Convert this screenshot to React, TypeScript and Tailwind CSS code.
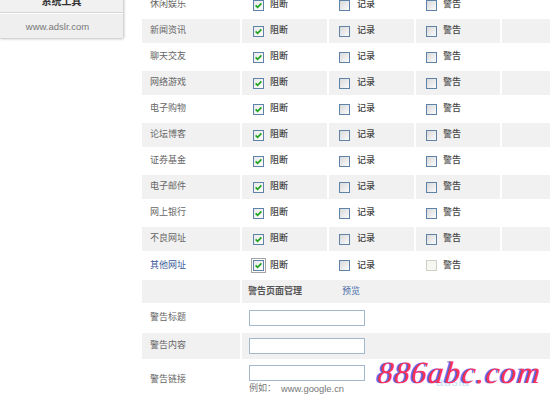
import React from "react";

const FONT = '"Liberation Sans", "Noto Sans CJK SC", sans-serif';

function Check({ checked, disabled }: { checked?: boolean; disabled?: boolean }) {
  if (disabled) {
    return <span className="inline-block w-[11px] h-[11px] border border-[#cfcfc6] bg-[#f7f7f2] shrink-0" />;
  }
  return (
    <span
      className={
        "relative inline-block w-[11px] h-[11px] border border-[#5f82a8] shrink-0 " +
        (checked ? "bg-gradient-to-br from-[#e9e9e9] to-[#fcfcfc]" : "bg-gradient-to-br from-[#d9d9d9] to-[#fbfbfb]")
      }
    >
      {checked && (
        <svg className="absolute left-0 top-0" width="9" height="9" viewBox="0 0 9 9">
          <polyline points="1.6,4.4 3.6,6.4 7.4,2.4" fill="none" stroke="#1ea31e" strokeWidth="1.6" />
        </svg>
      )}
    </span>
  );
}

const labels = [
  "休闲娱乐",
  "新闻资讯",
  "聊天交友",
  "网络游戏",
  "电子购物",
  "论坛博客",
  "证券基金",
  "电子邮件",
  "网上银行",
  "不良网址",
  "其他网址",
];

export default function App() {
  return (
    <div
      className="relative w-[550px] h-[394px] overflow-hidden bg-white flex"
      style={{ fontFamily: FONT }}
    >
      {/* sidebar */}
      <div className="w-[142px] shrink-0">
        <div className="w-[124px] mt-[-10px] border-r border-b border-[#d4d4d4] rounded-br-[4px] bg-[#f1f1f1] shadow-[1px_1px_2px_rgba(0,0,0,0.12)]">
          <div className="h-[23px] flex items-center justify-center text-[10px] font-bold text-[#333] border-b border-[#d8d8d8]">
            系统工具
          </div>
          <div className="h-[25px] flex items-center justify-center pr-[8px] pt-[2px] text-[9.5px] text-[#777] bg-[#efefef] border-t border-white">
            www.adslr.com
          </div>
        </div>
      </div>

      {/* table */}
      <div className="mt-[-7px] grid grid-cols-[98px_85px_85px_84px_60px] gap-[2px] content-start text-[9px] text-[#666]">
        {labels.map((l, i) => {
          const gray = i % 2 === 1;
          const last = i === 10;
          const bg = gray ? "bg-[#f1f1f1]" : "bg-white";
          const h = last ? "h-[25px]" : "h-[24px]";
          return (
            <React.Fragment key={l}>
              <div className={`${bg} ${h} flex items-center pl-[8px] ${last ? "text-[#3a5a99]" : ""}`}>{l}</div>
              <div className={`${bg} ${h} flex items-center pl-[11px] gap-[6px] text-[#444] font-medium`}>
                {last ? (
                  <span className="inline-flex items-center justify-center w-[15px] h-[15px] border border-[#a3a3a3] -ml-[2px] -mr-[2px]">
                    <Check checked />
                  </span>
                ) : (
                  <Check checked />
                )}
                <span>阻断</span>
              </div>
              <div className={`${bg} ${h} flex items-center pl-[10px] gap-[7px] text-[#444] font-medium`}>
                <Check />
                <span>记录</span>
              </div>
              <div className={`${bg} ${h} flex items-center pl-[10px] gap-[6px] text-[#444] font-medium`}>
                <Check disabled={last} />
                <span>警告</span>
              </div>
              <div className={`${bg} ${h}`} />
            </React.Fragment>
          );
        })}

        {/* warning page header */}
        <div className="bg-[#f1f1f1] h-[23px]" />
        <div className="col-span-4 bg-[#f1f1f1] h-[23px] flex items-center pl-[6px] text-[#555]">
          <span className="w-[94px] font-bold">警告页面管理</span>
          <span className="text-[#4a6aa8]">预览</span>
        </div>

        {/* title */}
        <div className="h-[26px] flex items-center pl-[8px]">警告标题</div>
        <div className="col-span-4 h-[26px] flex items-center pl-[7px]">
          <div className="w-[116px] h-[16px] border border-[#a3b8cc] bg-white" />
        </div>

        {/* content */}
        <div className="bg-[#f1f1f1] h-[26px] flex items-center pl-[8px]">警告内容</div>
        <div className="col-span-4 bg-[#f1f1f1] h-[26px] flex items-center pl-[7px]">
          <div className="w-[116px] h-[16px] border border-[#a3b8cc] bg-white" />
        </div>

        {/* link */}
        <div className="h-[38px] flex items-center pl-[8px]">警告链接</div>
        <div className="col-span-4 h-[38px] pl-[7px] pt-[4px]">
          <div className="w-[116px] h-[16px] border border-[#a3b8cc] bg-white" />
          <div className="mt-[2px] flex items-center h-[12px] text-[#777]">
            <span>例如：</span>
            <span className="ml-[5px] text-[9.4px]">www.google.cn</span>
          </div>
        </div>
      </div>

      {/* watermark */}
      <div className="absolute left-[436px] top-[372px] text-[13px] text-[#c4e2f5] tracking-[0.5px]">
        adsla
      </div>
      <div
        className="absolute left-[378px] top-[357px] text-[31px] leading-none tracking-[1.3px] text-[#ff3358] -skew-x-6"
        style={{
          fontFamily: '"Liberation Serif", "DejaVu Serif", serif',
          fontStyle: "italic",
          fontWeight: 400,
          textShadow: "-2px 0 0 rgba(55,70,255,0.8)",
        }}
      >
        886abc.com
      </div>
    </div>
  );
}
